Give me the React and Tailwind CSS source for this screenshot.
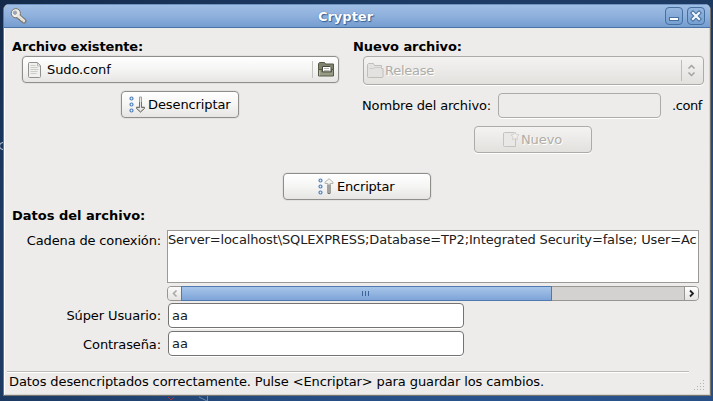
import React from "react";

const raised = "border border-[#8f8e8b] rounded-[4px] bg-linear-to-b from-white from-0% via-[#f5f5f4] via-50% to-[#e6e5e3] shadow-[0_0_0_1px_#e2e1df]";
const disabled = "border border-[#acaba8] rounded-[4px] bg-linear-to-b from-[#f4f3f1] from-0% via-[#ebeae8] via-50% to-[#e2e1de] text-[#aeada9] [text-shadow:1px_1px_0_#fff] shadow-[0_1px_0_#fff]";

function KeyIcon() {
  return (
    <svg width="17" height="17" viewBox="0 0 17 17">
      <path d="M8.2 8.2 L14 13" stroke="#77736b" strokeWidth="5" strokeLinecap="round" />
      <circle cx="5.8" cy="5.2" r="4.6" fill="#eeeeec" stroke="#77736b" />
      <path d="M8.2 8 L13.8 12.8" stroke="#e6e5e1" strokeWidth="3" strokeLinecap="round" />
      <circle cx="5" cy="4.7" r="1.7" fill="#8aa6ca" stroke="#a8a69f" />
      <path d="M9 12l1-1.200M11.500 14l1-1.200" stroke="#77736b" />
    </svg>
  );
}

function DocIcon() {
  return (
    <svg width="14" height="16" viewBox="0 0 14 16">
      <path d="M1.5 .5h8l3 3v11a1 1 0 0 1-1 1h-10a1 1 0 0 1-1-1v-13a1 1 0 0 1 1-1z" fill="#f0f0ee" stroke="#92918d" />
      <path d="M9.5 1v3h3z" fill="#fff" stroke="#aaa9a5" strokeWidth=".8" />
      <path d="M2.5 3.5h5M2.5 5.5h7M2.5 7.5h8M2.5 9.5h7M2.5 11.5h6" stroke="#cccbc8" />
    </svg>
  );
}

function OpenFolderIcon() {
  return (
    <svg width="17" height="15" viewBox="0 0 17 15">
      <path d="M.5 13.500v-12l1-1h5l1 1.500h8v11.500z" fill="#80836e" stroke="#555946" />
      <path d="M4.500 10V4.500h7.500l1 1V10z" fill="#fff" stroke="#45483a" />
      <path d="M6 6.500h5M6 8.500h5.500" stroke="#b5b5b2" />
      <path d="M.5 14v-6.500h3.500v2.500h9.500V7.500h2V14z" fill="#989b86" stroke="#555946" />
      <path d="M1.500 13.500v-5" stroke="#b5b8a4" />
    </svg>
  );
}

function FolderIcon() {
  return (
    <svg width="17" height="16" viewBox="0 0 17 16">
      <path d="M1.5 14.500a1 1 0 0 1-1-1v-12l1-1h5l1 2h7v3h1.500v8.500l-.500.500z" fill="#e3e2e0" stroke="#bfbebb" />
      <path d="M2.500 5.500h4l1.500-1h7" fill="none" stroke="#cccbc8" />
    </svg>
  );
}

function SortIcon({ up }) {
  return (
    <svg width="17" height="17" viewBox="0 0 17 17">
      <g fill="#e8f0fa" stroke="#4f7fbb" strokeWidth="1.200">
        <circle cx="2.500" cy="2.500" r="1.500" />
        <circle cx="2.500" cy="8.500" r="1.500" />
        <circle cx="2.500" cy="14.500" r="1.500" />
      </g>
      {up ? (
        <>
          <path d="M10 15.500V5.500H7V4.200L11 .700l4 3.500v1.300h-3v10z" fill="#f3f3f2" stroke="#b4b4b1" />
          <path d="M10 6.500v9h2v-9" fill="none" stroke="#70706d" />
        </>
      ) : (
        <>
          <path d="M10.500 1v10h-3v1.300l4 3.700 4-3.700V11h-3V1z" fill="#e6e6e4" stroke="#a0a09d" />
          <path d="M10.500 6v5.500h-3v1l4 3.500 4-3.500v-1h-3V6" fill="none" stroke="#71716e" />
        </>
      )}
    </svg>
  );
}

function NewIcon() {
  return (
    <svg width="17" height="17" viewBox="0 0 17 17">
      <path d="M1.500 1.500h11v14h-11a1 1 0 0 1-1-1v-12a1 1 0 0 1 1-1z" fill="#e9e8e6" stroke="#c4c3c0" />
      <path d="M12 1l1.300 2.500 2.700.400-2 2 .500 2.800-2.500-1.300-2.500 1.300.500-2.800-2-2 2.700-.400z" fill="#f1f0ee" stroke="#d3d2cf" />
    </svg>
  );
}

function Section({ children, className = "" }) {
  return <div className={`h-[18px] leading-[20px] font-bold ${className}`}>{children}</div>;
}

function Entry({ value }) {
  return (
    <div className="w-[296px] h-[25px] rounded-[4px] border border-[#757371] bg-white shadow-[0_1px_0_#fff] pl-[3px] leading-[23px] tracking-normal text-[#1a1a1a]">
      {value}
    </div>
  );
}

function TitleButton({ children }) {
  return (
    <div className="w-[18px] h-[18px] rounded-[4px] border border-[#456f9f] bg-linear-to-b from-[#95b6df] to-[#759fd1] shadow-[0_0_0_1px_#9bbce433]">
      {children}
    </div>
  );
}

export default function App() {
  return (
    <div className="relative w-[713px] h-[401px] overflow-hidden pt-1 pl-[3px] bg-[radial-gradient(ellipse_at_75%_75%,#2d5b9a_0%,#264d82_40%,#142a49_100%)] font-['DejaVu_Sans',sans-serif] text-[13px] tracking-[-0.1px] whitespace-nowrap text-black">
      <svg className="absolute left-0 top-0" width="713" height="401" viewBox="0 0 713 401" fill="none">
        <path d="M3 142.500a3.500 3.500 0 1 0 0 7" stroke="#c8d0dc" />
        <path d="M168 397l3 3 3-3" stroke="#a83240" />
        <path d="M199 397l8 4M207.500 396v5" stroke="#6c87a8" />
      </svg>
      <div className="relative w-[708px] h-[392px] flex flex-col rounded-t-[6px] overflow-hidden bg-[#edeceb] border-x border-b border-[#77746f]">
        <div className="h-6 shrink-0 flex items-center border-t border-b border-t-[#6f94c2] border-b-[#4a73a8] bg-linear-to-b from-[#a0bee5] via-[#8eb0dc] to-[#759dd0] pl-[6px] pr-[5px]">
          <KeyIcon />
          <div className="grow text-center pt-px pr-px tracking-normal font-bold text-white [text-shadow:1px_1px_1px_#375f93,0_0_1px_#375f93]">Crypter</div>
          <div className="flex gap-1">
            <TitleButton>
              <svg width="16" height="16" viewBox="0 0 16 16"><rect x="3.500" y="9.500" width="9" height="3" fill="#fff" stroke="#456f9f" /></svg>
            </TitleButton>
            <TitleButton>
              <svg width="16" height="16" viewBox="0 0 16 16" strokeLinecap="square">
                <path d="M5 5l6 6M11 5l-6 6" stroke="#456f9f" strokeWidth="4.200" />
                <path d="M5 5l6 6M11 5l-6 6" stroke="#f4f8fd" strokeWidth="2.200" />
              </svg>
            </TitleButton>
          </div>
        </div>

        <div className="grow border-l border-r border-l-white border-r-[#d6d4d1] border-b border-b-[#d6d4d1]">
          <div className="flex h-[126px] pt-[9px] pl-[7px]">
            <div className="w-[341px]">
              <Section className="tracking-[-0.15px]">Archivo existente:</Section>
              <div className={`ml-[10px] mt-px w-[317px] h-[27px] flex items-center pl-[5px] ${raised}`}>
                <DocIcon />
                <span className="ml-[5px] grow">Sudo.conf</span>
                <span className="w-px h-[17px] bg-[#c4c3c0]" />
                <span className="ml-[5px] mr-[3px]"><OpenFolderIcon /></span>
              </div>
              <div className={`ml-[109px] mt-2 w-[118px] h-[27px] flex items-center pl-[7px] gap-[2px] ${raised}`}>
                <SortIcon />
                <span className="tracking-[-0.1px]">Desencriptar</span>
              </div>
            </div>
            <div>
              <Section className="tracking-[-0.08px]">Nuevo archivo:</Section>
              <div className={`ml-[10px] mt-px w-[341px] h-[29px] flex items-center pl-[3px] ${disabled}`}>
                <FolderIcon />
                <span className="grow ml-px tracking-[-0.25px]">Release</span>
                <span className="w-px h-[21px] bg-[#bdbcb9]" />
                <svg className="ml-[5px] mr-[7px]" width="9" height="13" viewBox="0 0 9 13" fill="none" stroke="#a3a29e" strokeWidth="1.500">
                  <path d="M1.500 4.500l3-3 3 3M1.500 8.500l3 3 3-3" />
                </svg>
              </div>
              <div className="flex items-center mt-2 ml-[9px] h-[25px]">
                <span className="w-[136px] tracking-[-0.15px]">Nombre del archivo:</span>
                <div className="w-[163px] h-[25px] rounded-[4px] border border-[#acaba8] shadow-[0_1px_0_#fff]" />
                <span className="ml-[11px] tracking-[-0.4px]">.conf</span>
              </div>
              <div className={`ml-[121px] mt-2 w-[118px] h-[27px] flex items-center pl-[28px] gap-px ${disabled}`}>
                <NewIcon />
                <span className="tracking-[-0.1px]">Nuevo</span>
              </div>
            </div>
          </div>

          <div className={`ml-[278px] mt-[19px] w-[148px] h-[27px] flex items-center pl-[34px] gap-[2px] ${raised}`}>
            <SortIcon up />
            <span className="tracking-[-0.2px]">Encriptar</span>
          </div>

          <Section className="ml-[7px] mt-[6px] tracking-normal">Datos del archivo:</Section>

          <div className="flex mt-[6px]">
            <div className="w-[156px] text-right leading-[22px] tracking-[-0.15px]">Cadena de conexión:</div>
            <div className="ml-[6px] w-[532px]">
              <div className="h-[53px] border border-[#9c9a97] bg-white overflow-hidden leading-[18px] tracking-[-0.135px] text-[#202020]">
                Server=localhost\SQLEXPRESS;Database=TP2;Integrated Security=false; User=Ac
              </div>
              <div className="mt-[3px] h-[15px] flex border border-[#989693] rounded-[4px] bg-[#d3d2d0]">
                <div className="w-[13px] rounded-l-[3px] bg-linear-to-b from-[#fafafa] to-[#e5e4e2]">
                  <svg width="13" height="13" viewBox="0 0 13 13" fill="none" stroke="#aaa9a6" strokeWidth="1.600"><path d="M8.500 3.500l-3 3 3 3" /></svg>
                </div>
                <div className="-my-px w-[371px] border border-[#5079b0] bg-linear-to-b from-[#a8c5ea] to-[#7ea4d7] flex items-center justify-center gap-[2px] pr-[3px]">
                  <span className="w-px h-[5px] bg-[#3e659a]" />
                  <span className="w-px h-[5px] bg-[#3e659a]" />
                  <span className="w-px h-[5px] bg-[#3e659a]" />
                </div>
                <div className="grow" />
                <div className="w-[14px] border-l border-[#989693] rounded-r-[3px] bg-linear-to-b from-white to-[#e5e4e2]">
                  <svg width="13" height="13" viewBox="0 0 13 13" fill="none" stroke="#222" strokeWidth="1.800"><path d="M5 3.500l3 3-3 3" /></svg>
                </div>
              </div>
            </div>
          </div>

          <div className="flex mt-[2px]">
            <div className="w-[156px] text-right leading-[25px]">Súper Usuario:</div>
            <div className="ml-[7px]"><Entry value="aa" /></div>
          </div>
          <div className="flex mt-[3px]">
            <div className="w-[156px] text-right leading-[27px] h-[25px]">Contraseña:</div>
            <div className="ml-[7px]"><Entry value="aa" /></div>
          </div>

          <div className="mt-[15px] ml-[2px] w-[682px] h-[2px] border-t border-t-[#bdbbb8] bg-white" />
          <div className="flex justify-between h-[20px] pl-1 pr-[3px]">
            <span className="leading-[18px]">Datos desencriptados correctamente. Pulse &lt;Encriptar&gt; para guardar los cambios.</span>
            <svg className="mt-[7px]" width="12" height="12" viewBox="0 0 12 12" fill="#b5b3af">
              {[[9, 0], [6, 3], [9, 3], [3, 6], [6, 6], [9, 6], [0, 9], [3, 9], [6, 9], [9, 9]].map(([x, y]) => (
                <rect key={`${x}-${y}`} x={x} y={y} width="1" height="1" />
              ))}
            </svg>
          </div>
        </div>
      </div>
    </div>
  );
}
